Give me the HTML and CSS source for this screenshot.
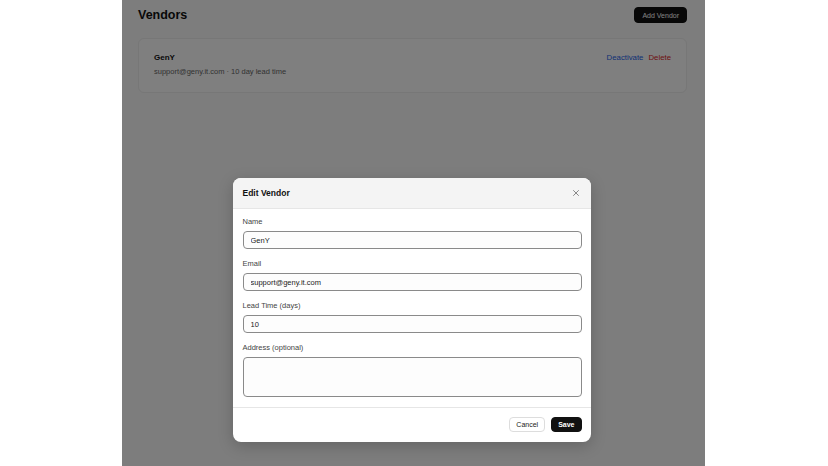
FILE: index.html
```html
<!DOCTYPE html>
<html lang="en">
<head>
  <meta charset="UTF-8">
  <meta name="viewport" content="width=device-width, initial-scale=1.0">
  <title>Vendors</title>
  <link rel="stylesheet" href="styles.css">
</head>
<body>
  <div class="frame">
    <div class="page">
      <div class="page-head">
        <h1>Vendors</h1>
        <button class="btn-dark">Add Vendor</button>
      </div>
      <div class="vendor-card">
        <div>
          <div class="vendor-name">GenY</div>
          <div class="vendor-meta">support@geny.it.com · 10 day lead time</div>
        </div>
        <div class="vendor-actions">
          <a class="link-blue">Deactivate</a>
          <a class="link-red">Delete</a>
        </div>
      </div>
    </div>

    <div class="overlay">
      <div class="modal">
        <div class="modal-head">
          <span>Edit Vendor</span>
          <svg class="close" width="8" height="8" viewBox="0 0 8 8">
            <path d="M1.5 1.5L6.5 6.5M6.5 1.5L1.5 6.5" stroke="#888" stroke-width="1" stroke-linecap="round"/>
          </svg>
        </div>
        <form class="modal-body">
          <label>Name</label>
          <input type="text" value="GenY">
          <label>Email</label>
          <input type="text" value="support@geny.it.com">
          <label>Lead Time (days)</label>
          <input type="text" value="10">
          <label>Address (optional)</label>
          <textarea></textarea>
        </form>
        <div class="modal-foot">
          <button class="btn-light">Cancel</button>
          <button class="btn-dark btn-save">Save</button>
        </div>
      </div>
    </div>
  </div>
</body>
</html>
```

FILE: styles.css
```css
body {
  margin: 0;
  background: #fff;
  font-family: "Liberation Sans", Arial, sans-serif;
  color: #111;
}

.frame {
  position: relative;
  width: 583px;
  height: 466px;
  margin: 0 0 0 122px;
  background: #fafafa;
  overflow: hidden;
}

.page {
  padding: 0 18px 0 16px;
}

.page-head {
  display: flex;
  justify-content: space-between;
  align-items: center;
  height: 30px;
  margin-bottom: 8px;
}

h1 {
  margin: 0;
  font-size: 12.5px;
  font-weight: 700;
}

button {
  font-family: inherit;
  cursor: pointer;
}

.btn-dark {
  background: #111;
  color: #fff;
  border: 1px solid #111;
  border-radius: 4px;
  font-size: 7px;
  padding: 0 7px;
  height: 16px;
}

.vendor-card {
  display: flex;
  justify-content: space-between;
  align-items: flex-start;
  background: #fff;
  border: 1px solid #eee;
  border-radius: 6px;
  padding: 14px 15px;
  height: 25px;
}

.vendor-name {
  font-size: 8px;
  font-weight: 700;
  margin-bottom: 5px;
}

.vendor-meta {
  font-size: 7.5px;
  color: #666;
}

.vendor-actions {
  display: flex;
  gap: 5px;
  font-size: 7.8px;
}

.link-blue {
  color: #2563eb;
}

.link-red {
  color: #dc2626;
}

.overlay {
  position: absolute;
  inset: 0;
  background: rgba(0, 0, 0, 0.5);
  display: flex;
  justify-content: center;
  align-items: flex-start;
  padding-top: 178px;
}

.modal {
  width: 358px;
  margin-left: -4px;
  background: #fff;
  border-radius: 8px;
  overflow: hidden;
  box-shadow: 0 4px 16px rgba(0, 0, 0, 0.2);
}

.modal-head {
  display: flex;
  justify-content: space-between;
  align-items: center;
  height: 30px;
  padding: 0 11px 0 10px;
  background: #f4f4f4;
  border-bottom: 1px solid #e6e6e6;
  font-size: 8.5px;
  font-weight: 700;
}

.modal-body {
  display: flex;
  flex-direction: column;
  padding: 8px 9px 10px 10px;
}

.modal-body label {
  font-size: 7.5px;
  color: #444;
  line-height: 10px;
  margin-bottom: 4px;
}

.modal-body input,
.modal-body textarea {
  font-family: inherit;
  font-size: 7.5px;
  color: #222;
  border: 1px solid #8a8a8a;
  border-radius: 4px;
  background: #fdfdfd;
  padding: 0 7px;
  margin: 0 0 10px;
  box-sizing: border-box;
}

.modal-body input {
  height: 18px;
}

.modal-body textarea {
  height: 40px;
  margin-bottom: 0;
  resize: none;
}

.modal-foot {
  display: flex;
  justify-content: flex-end;
  gap: 6px;
  border-top: 1px solid #e6e6e6;
  padding: 9px 9px 10px;
}

.btn-light {
  background: #fff;
  color: #222;
  border: 1px solid #ddd;
  border-radius: 4px;
  font-size: 7px;
  height: 15px;
  padding: 0 6px;
}

.btn-save {
  height: 15px;
  padding: 0 6px;
  font-weight: 700;
}
```
